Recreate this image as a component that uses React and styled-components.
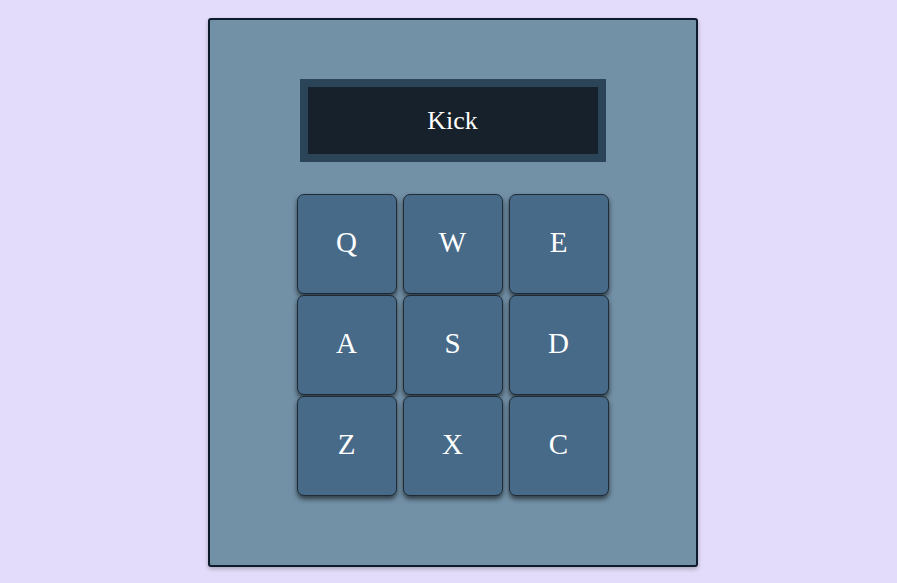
import React, { useState } from "react";
import styled, { createGlobalStyle } from "styled-components";

const GlobalStyle = createGlobalStyle`
  html, body {
    margin: 0;
    background: #e3dcfa;
  }
  * {
    box-sizing: border-box;
  }
`;

const PADS = [
  { key: "Q", name: "Heater 1" },
  { key: "W", name: "Heater 2" },
  { key: "E", name: "Heater 3" },
  { key: "A", name: "Heater 4" },
  { key: "S", name: "Clap" },
  { key: "D", name: "Open HH" },
  { key: "Z", name: "Kick n' Hat" },
  { key: "X", name: "Kick" },
  { key: "C", name: "Closed HH" },
];

const App = () => {
  const [current, setCurrent] = useState("Kick");

  return (
    <Page>
      <GlobalStyle />
      <Machine id="drum-machine">
        <Display id="display">{current}</Display>
        <PadGrid>
          {PADS.map((pad) => (
            <Pad key={pad.key} onClick={() => setCurrent(pad.name)}>
              {pad.key}
            </Pad>
          ))}
        </PadGrid>
      </Machine>
    </Page>
  );
};

export default App;

const Page = styled.div`
  display: flex;
  justify-content: center;
  padding: 18px 0 0 8px;
  min-height: 583px;
`;

const Machine = styled.div`
  width: 490px;
  height: 549px;
  background: #7290a6;
  border: 2px solid #0d1b2c;
  border-radius: 3px;
  box-shadow: 0 2px 4px rgba(0, 0, 0, 0.25);
  display: flex;
  flex-direction: column;
  align-items: center;
  padding-top: 59px;
`;

const Display = styled.div`
  width: 306px;
  height: 83px;
  border: 8px solid #2b4458;
  background: #16212b;
  color: #fff;
  font-family: "Liberation Serif", "Times New Roman", serif;
  font-size: 26px;
  display: flex;
  align-items: center;
  justify-content: center;
`;

const PadGrid = styled.div`
  margin-top: 32px;
  display: grid;
  grid-template-columns: repeat(3, 100px);
  grid-auto-rows: 100px;
  column-gap: 6px;
  row-gap: 1px;
`;

const Pad = styled.button`
  width: 100px;
  height: 100px;
  background: #476a89;
  border: 1px solid #1f2c38;
  border-radius: 7px;
  box-shadow: 0 3px 5px rgba(0, 0, 0, 0.6);
  color: #fff;
  font-family: "Liberation Serif", "Times New Roman", serif;
  font-size: 29px;
  cursor: pointer;
  padding: 0 0 3px;
  display: flex;
  align-items: center;
  justify-content: center;

  &:active {
    background: #3a5a76;
  }
`;
